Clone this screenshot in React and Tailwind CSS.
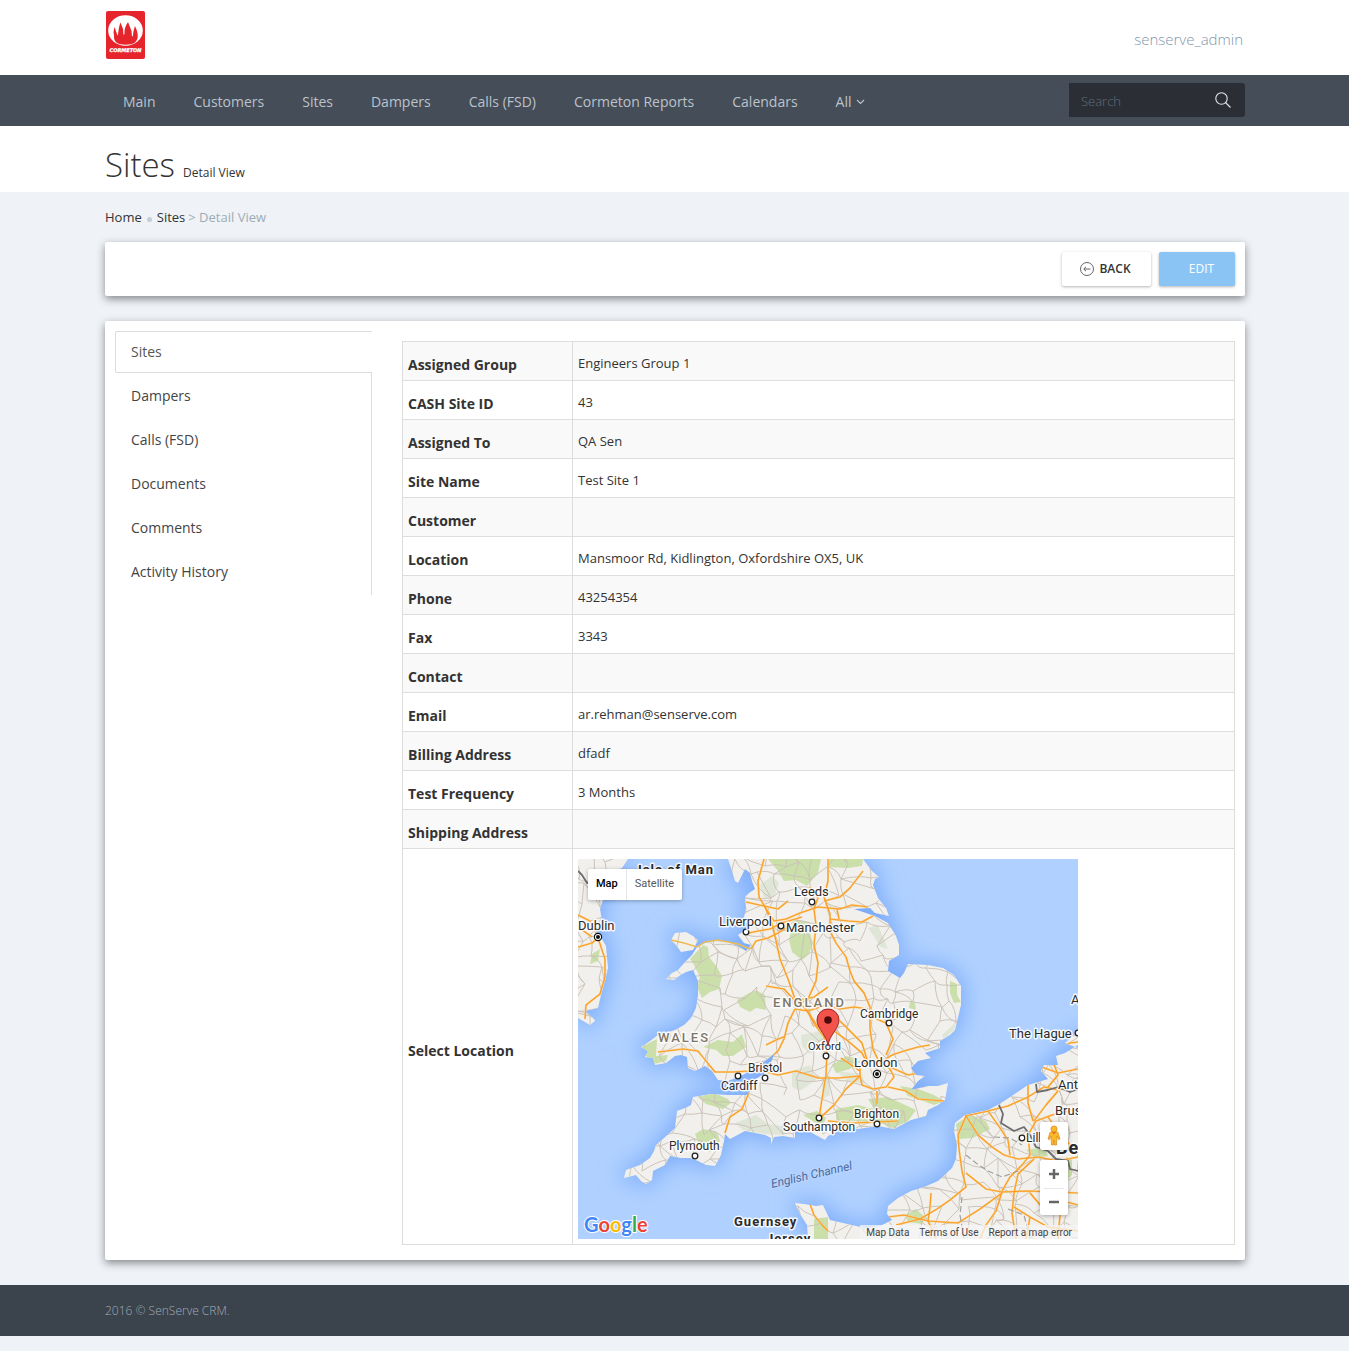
import React from "react";

const navItems = ["Main", "Customers", "Sites", "Dampers", "Calls (FSD)", "Cormeton Reports", "Calendars"];
const tabs = ["Sites", "Dampers", "Calls (FSD)", "Documents", "Comments", "Activity History"];
const rows = [
  ["Assigned Group", "Engineers Group 1"],
  ["CASH Site ID", "43"],
  ["Assigned To", "QA Sen"],
  ["Site Name", "Test Site 1"],
  ["Customer", ""],
  ["Location", "Mansmoor Rd, Kidlington, Oxfordshire OX5, UK"],
  ["Phone", "43254354"],
  ["Fax", "3343"],
  ["Contact", ""],
  ["Email", "ar.rehman@senserve.com"],
  ["Billing Address", "dfadf"],
  ["Test Frequency", "3 Months"],
  ["Shipping Address", ""],
];

/* ---------- map geometry, in a 500 x 380 space ---------- */

const britain =
  "M150 0 153 9 157 22 160 24 167 10 172 14 174 22 177 30 171 34 167 38 168 49 166 58 170 66 166 72 160 76 166 84 173 86 168 92 160 87 150 83 138 82 127 84 119 88 114 96 108 102 100 111 94 114 88 120 96 121 101 117 108 113 115 111 120 122 120 136 118 149 113 159 106 166 97 171 80 176 72 182 63 188 70 192 67 198 75 199 77 206 88 204 97 197 103 196 109 198 110 209 117 212 127 207 134 212 140 221 150 222 163 217 172 212 187 202 197 194 190 210 187 214 175 222 170 236 150 236 133 235 121 237 115 238 113 246 107 249 99 252 97 269 86 279 78 286 76 292 72 299 62 306 48 311 46 319 58 316 63 322 68 325 74 321 75 312 87 306 92 297 103 299 112 299 120 302 128 306 137 307 143 296 146 282 147 275 152 280 167 272 187 276 193 279 193 285 196 278 205 277 217 279 217 272 232 273 247 281 250 277 263 271 280 270 300 267 316 270 333 261 348 257 350 251 360 246 367 241 370 224 360 227 350 227 333 231 340 222 347 217 338 216 333 209 340 202 353 199 347 194 362 189 362 182 372 176 377 171 383 146 383 127 376 116 365 109 350 106 330 105 326 114 322 119 310 112 311 102 321 96 321 86 318 77 310 64 297 57 288 54 276 50 292 49 297 54 311 57 308 49 300 39 295 26 297 20 301 18 294 12 285 0Z";
const anglesey = "M97 74 108 73 115 77 120 81 115 91 103 93 98 86 93 81Z";
const ireland =
  "M0 0 50 0 44 9 36 12 38 19 29 26 25 41 22 50 24 62 17 72 24 80 28 87 30 109 27 122 23 136 20 149 7 152 16 160 17 162 12 166 0 159Z";
const continent =
  "M500 186 487 194 478 197 480 206 466 206 463 212 470 220 450 226 423 244 410 251 387 256 377 264 376 272 379 286 378 300 374 309 360 322 346 328 333 332 320 339 310 347 309 355 314 361 302 367 287 369 265 364 252 361 245 346 238 347 226 345 217 344 222 355 229 366 230 380 500 380Z";
const holland = "M487 184 494 178 500 172 500 189 492 186Z";
const land = britain + anglesey + ireland + continent + holland;

const parks = [
  "M190 0 243 0 240 14 229 27 218 21 206 22 200 12Z",
  "M250 0 285 0 284 7 270 9 250 8Z",
  "M125 86 130 88 131 98 139 108 144 117 141 130 132 133 124 139 119 128 122 118 116 106 112 100Z",
  "M159 141 166 137 171 134 178 131 187 136 188 151 178 149 172 153 162 148Z",
  "M216 61 232 63 232 74 235 84 231 95 224 101 214 93 211 81Z",
  "M63 188 79 180 78 197 90 196 88 202 76 205 69 198Z",
  "M125 188 140 181 155 183 164 175 168 188 155 197 145 197 138 191Z",
  "M120 238 136 234 150 240 153 244 145 250 128 245Z",
  "M117 275 125 270 139 273 142 282 132 293 122 288Z",
  "M225 256 239 252 248 259 245 266 238 264Z",
  "M258 250 280 246 296 250 290 240 310 238 325 245 338 251 330 262 315 269 303 264 280 262 258 261Z",
  "M322 227 340 230 356 236 366 242 356 246 345 242 330 237Z",
  "M254 206 268 197 280 200 272 210 258 214Z",
  "M378 265 392 256 408 262 412 270 395 279 380 280Z",
  "M372 122 379 125 379 136 383 143 376 144 372 134Z",
  "M332 142 337 144 338 151 331 149Z",
  "M327 356 338 350 348 359 344 365 330 363Z",
  "M14 95 22 90 20 102 12 105Z",
  "M236 360 250 358 250 380 236 380Z",
  "M448 291 466 288 470 297 458 299Z",
  "M488 298 494 301 494 316 488 322Z",
];

const paleParks = [
  "M182 26 194 17 201 24 196 38 186 39Z",
  "M290 69 300 66 310 90 303 88Z",
  "M223 176 242 172 248 186 232 195 224 187Z",
  "M214 212 232 206 238 221 222 232 214 228Z",
  "M157 264 178 256 190 265 210 268 206 276 187 275 165 271Z",
  "M364 176 374 167 378 162 376 171 366 180Z",
  "M258 212 284 215 287 225 270 222Z",
  "M244 222 252 216 252 236 244 240Z",
];

const motorways = [
  "M186 0 180 22 181 38 187 48 194 64 198 82 202 100 210 120 217 140 228 150 237 166 246 178 249 192 248 216 244 240 241 259",
  "M168 43 186 47 200 50 210 42",
  "M187 48 196 62 208 60 222 54 240 48 262 50 274 46 290 48",
  "M167 75 180 72 192 70 204 64 224 58",
  "M173 90 178 82 190 79 200 74 210 68",
  "M250 0 250 22 246 38 252 55 252 72 258 84 268 98 272 112 276 122 286 134 292 148 292 170 295 190 302 205",
  "M252 60 270 62 284 63 295 57",
  "M246 42 262 38 272 29 285 12",
  "M259 50 261 60",
  "M232 28 240 39 236 50 238 66 236 86 240 104 238 122 230 140 219 146",
  "M188 127 206 130 217 142 236 138 250 128",
  "M217 150 210 164 206 180 200 192 182 208 174 220 170 236 164 250 152 258 147 274",
  "M217 150 230 152 248 146 262 150 276 148 290 150",
  "M188 186 200 180 206 178",
  "M228 150 240 168 256 172 270 182 284 194 290 206",
  "M262 162 276 176 284 184 290 204",
  "M172 212 184 212 200 216 218 212 240 219 260 219 282 217",
  "M80 193 105 190 120 192 128 202 137 213 155 213 170 212 184 206",
  "M282 217 282 208 290 202 302 202 312 210 316 218 308 228 295 230 284 226Z",
  "M263 199 282 212M282 217 268 230 256 246 242 259",
  "M250 262 275 264 299 263 320 262",
  "M299 232 299 245",
  "M310 228 328 232 340 240 366 242",
  "M302 204 314 196 326 192 340 188 352 186",
  "M312 208 330 216 346 213",
  "M308 196 315 180 308 164 294 158",
  "M0 56 12 62 20 78 M0 88 14 84 20 79 27 100 27 118 22 135 8 146 7 160",
  "M0 68 14 78",
  "M388 257 380 276 381 290 384 312 388 328 372 341 359 350 342 360 318 366",
  "M387 257 410 252 430 247 450 238 466 228 480 231 500 228",
  "M388 257 400 276 414 288 426 296 440 300 460 298 480 302 500 298",
  "M388 314 408 330 424 333 450 332 476 333 500 334",
  "M424 332 432 318 444 306 452 296 450 276 458 262 474 256 500 250",
  "M450 226 450 244 455 262",
  "M410 252 420 266 430 281 432 296",
  "M438 380 434 354 436 334 440 315 456 300",
  "M436 348 452 358 470 368 500 372",
  "M353 334 352 348 350 362 358 380",
  "M310 358 326 356 350 362 380 364 402 350 424 334",
  "M424 333 418 352 408 366 402 380",
  "M452 334 464 348 478 340 500 346",
  "M470 258 480 272 492 286 500 288",
  "M456 262 468 246 480 232",
  "M464 208 480 214 500 210M474 200 480 216 470 228",
  "M481 190 492 184 500 183",
  "M482 356 480 380M452 358 448 380",
  "M232 345 236 356 244 366 250 372",
];

const borders = [
  "M421 246 425 255 423 264 436 272 446 268 452 276 458 288 470 292 478 300 490 302 492 310 500 312",
  "M458 225 459 233 470 231 480 228 492 233 500 230",
  "M0 12 4 16 9 24 18 22",
];

const dashes = ["M388 296 398 304 410 312 424 318 440 312", "M384 338 382 356 386 380M416 278 432 279 444 286", "M430 350 446 356 452 380"];

/* Minor road mesh: a jittered grid whose nodes join their neighbours. */
function rand(a, b, k) {
  const v = Math.sin(a * 127.1 + b * 311.7 + k * 74.7) * 43758.5453;
  return v - Math.floor(v);
}
function node(i, j) {
  return [Math.round(i * 17 + rand(i, j, 1) * 18 - 9), Math.round(j * 16 + rand(i, j, 2) * 16 - 8)];
}
function buildMinorRoads() {
  let d = "";
  const link = (p, q, k) => {
    const mx = Math.round((p[0] + q[0]) / 2 + (k - 0.5) * 9);
    const my = Math.round((p[1] + q[1]) / 2 + (0.5 - k) * 9);
    d += `M${p[0]} ${p[1]}Q${mx} ${my} ${q[0]} ${q[1]}`;
  };
  for (let i = -1; i < 31; i++) {
    for (let j = -1; j < 25; j++) {
      const p = node(i, j);
      if (rand(i, j, 3) > 0.2) link(p, node(i + 1, j), rand(i, j, 6));
      if (rand(i, j, 4) > 0.25) link(p, node(i, j + 1), rand(i, j, 7));
      if (rand(i, j, 5) > 0.65) link(p, node(i + 1, j + 1), rand(i, j, 8));
    }
  }
  return d;
}
const minorRoads = buildMinorRoads();

const places = [
  ["Dublin", 0, 71, 13],
  ["Leeds", 216, 37, 13],
  ["Liverpool", 141, 67, 13],
  ["Manchester", 208, 73, 13],
  ["Cambridge", 282, 159, 12],
  ["Oxford", 230, 191, 11],
  ["London", 276, 208, 13],
  ["Bristol", 170, 213, 12],
  ["Cardiff", 143, 231, 12],
  ["Southampton", 205, 272, 12],
  ["Brighton", 276, 259, 12],
  ["Plymouth", 91, 291, 12],
  ["The Hague", 431, 179, 13],
  ["A", 493, 145, 13],
  ["Ant", 480, 230, 13],
  ["Brus", 477, 256, 13],
  ["Lille", 448, 283, 12],
];
const dots = [[234, 43], [168, 73], [203, 67], [311, 164], [248, 197], [187, 219], [160, 217], [241, 259], [299, 265], [117, 297], [444, 279], [500, 174]];

function LocationMap() {
  return (
    <div className="relative h-[380px] w-full max-w-[500px] overflow-hidden bg-[#b0d1ff] font-[Roboto,sans-serif]">
      <svg viewBox="0 0 500 380" width="500" height="380" className="block max-w-none" role="img" aria-label="Map of southern Britain">
        <defs>
          <clipPath id="land">
            <path d={land} />
          </clipPath>
          <filter id="shore" x="-10%" y="-10%" width="120%" height="120%">
            <feGaussianBlur stdDeviation="11" />
          </filter>
        </defs>
        <rect width="500" height="380" fill="#b0d1ff" />
        <path d={land} fill="#7aabfa" stroke="#7aabfa" strokeWidth="6" filter="url(#shore)" />
        <path d={land} fill="#f2f0ed" />
        <g clipPath="url(#land)" fill="none" strokeLinejoin="round">
          {paleParks.map((d) => <path key={d} d={d} fill="#dfe6d8" />)}
          {parks.map((d) => <path key={d} d={d} fill="#cadfaa" />)}
          <path d={minorRoads} stroke="#cbc3b9" strokeWidth="1" />
          {motorways.map((d) => <path key={d} d={d} stroke="#fbd08c" strokeWidth="2" />)}
          {motorways.map((d) => <path key={d} d={d} stroke="#fa9e25" strokeWidth="1.2" />)}
          {dashes.map((d) => <path key={d} d={d} stroke="#a0a0a0" strokeWidth="1.2" strokeDasharray="6 3" />)}
          {borders.map((d) => <path key={d} d={d} stroke="#6e6e72" strokeWidth="1.8" />)}
        </g>
        <path d="M93 81 106 84 119 88 127 83 140 81 160 85 172 90" fill="none" stroke="#eebc55" strokeWidth="1.4" />
        <g fill="#fff" stroke="#222" strokeWidth="1.3">
          {dots.map(([x, y]) => <circle key={`${x}-${y}`} cx={x} cy={y} r="2.8" />)}
        </g>
        {[[20, 78], [299, 215]].map(([x, y]) => (
          <g key={x}>
            <circle cx={x} cy={y} r="3.6" fill="#fff" stroke="#111" strokeWidth="1.2" />
            <circle cx={x} cy={y} r="2" fill="#111" />
          </g>
        ))}
        <g fill="#2b2b2b" stroke="#fff" strokeOpacity="0.85" strokeWidth="3" strokeLinejoin="round" paintOrder="stroke">
          {places.map(([name, x, y, size]) => <text key={name} x={x} y={y} fontSize={size}>{name}</text>)}
          <g fontWeight="700" fontSize="13" letterSpacing="1">
            <text x="60" y="15">Isle of Man</text>
            <text x="156" y="367">Guernsey</text>
            <text x="188" y="384">Jersey</text>
          </g>
          <text x="478" y="295" fontWeight="700" fontSize="18" letterSpacing="1">Be</text>
          <g fill="#7d7769" fontSize="13" fontWeight="500" letterSpacing="2">
            <text x="195" y="148">ENGLAND</text>
            <text x="80" y="183">WALES</text>
          </g>
        </g>
        <text fontSize="12" fontStyle="italic" fill="#4a6a9c" stroke="#b9d5ff" strokeWidth="2" paintOrder="stroke" transform="translate(194 329) rotate(-13)">English Channel</text>
        <path d="M250 187C249 176 239 170 239 161A11 11 0 0 1 261 161C261 170 251 176 250 187Z" fill="#f3534a" stroke="#9c2a24" strokeWidth="1" />
        <circle cx="250" cy="161" r="3.8" fill="#4c0b0b" />
        <text x="6" y="373" fontSize="20" fontWeight="700" stroke="#fff" strokeWidth="2" paintOrder="stroke" fontFamily="Lato, sans-serif">
          <tspan fill="#4285f4">G</tspan><tspan fill="#ea4335">o</tspan><tspan fill="#fbbc05">o</tspan><tspan fill="#4285f4">g</tspan><tspan fill="#34a853">l</tspan><tspan fill="#ea4335">e</tspan>
        </text>
      </svg>

      <div className="absolute left-2.5 top-2.5 flex h-[31px] rounded-xs bg-white text-[11px] shadow-[0_1px_4px_rgba(0,0,0,0.3)]">
        <button type="button" className="px-2 font-medium text-black">Map</button>
        <button type="button" className="border-l border-gray-200 px-2 text-[#565656]">Satellite</button>
      </div>

      <div className="absolute bottom-6 right-2.5 flex w-7 flex-col gap-2.5">
        <button type="button" aria-label="Street View" className="flex h-7 items-center justify-center rounded-xs bg-white shadow-[0_1px_4px_rgba(0,0,0,0.3)]">
          <svg width="14" height="22" viewBox="0 0 14 22">
            <path d="M3 7.500 5 6.500H9L11 7.500 13 14 11.500 14.500 10 11 9.500 20H7.500L7 15 6.500 20H4.500L4 11 2.500 14.500 1 14Z" fill="#fbb829" stroke="#d58a1c" strokeWidth="0.7" />
            <circle cx="7" cy="4" r="3.100" fill="#fbb829" stroke="#d58a1c" strokeWidth="0.7" />
            <path d="M5 7H9L7 9.500Z" fill="#e0662a" />
          </svg>
        </button>
        <div className="flex flex-col rounded-xs bg-white shadow-[0_1px_4px_rgba(0,0,0,0.3)]">
          <button type="button" aria-label="Zoom in" className="flex h-7 items-center justify-center">
            <svg width="12" height="12" viewBox="0 0 12 12"><path d="M6 1V11M1 6H11" stroke="#666" strokeWidth="2.500" /></svg>
          </button>
          <div className="mx-1 border-t border-gray-200" />
          <button type="button" aria-label="Zoom out" className="flex h-[26px] items-center justify-center">
            <svg width="12" height="12" viewBox="0 0 12 12"><path d="M1 6H11" stroke="#666" strokeWidth="2.500" /></svg>
          </button>
        </div>
      </div>

      <div className="absolute bottom-0 right-0 flex h-3.5 items-center gap-2.5 bg-[#f5f5f5]/75 px-1.5 text-[10px] text-[#444]">
        <a href="#map-data">Map Data</a>
        <a href="#terms">Terms of Use</a>
        <a href="#report">Report a map error</a>
      </div>
    </div>
  );
}

function Logo() {
  return (
    <svg width="39" height="48" viewBox="0 0 39 48" role="img" aria-label="Cormeton">
      <rect width="39" height="48" rx="2" fill="#e5242c" />
      <ellipse cx="19.500" cy="19.500" rx="17.300" ry="15.300" fill="#fff" />
      <path d="M8 24C7 21 8 19 8.500 16L11.500 24.500 12 24C12.500 19 13 15 14.500 11.500L17 18 17.500 24 18.500 23C18 18 20 14 22 11L25.500 20 26 25.500 27 25C27 21 28 18 29 15L31 20C32 24 32.500 28 29 31.500C25 34.500 14 34.500 10.500 31.500C8 29.500 8 27 8 24Z" fill="#e5242c" />
      <text x="19.500" y="41" textAnchor="middle" fontFamily="DejaVu Sans, sans-serif" fontWeight="700" fontStyle="italic" fontSize="5" fill="#fff" stroke="#fff" strokeWidth="0.3">CORMETON</text>
    </svg>
  );
}

const container = "mx-auto w-full max-w-[1169px] pl-[15px] pr-[14px]";
const cardShadow = "rounded-xs bg-white shadow-[0_3px_8px_rgba(0,0,0,0.45)]";

export default function App() {
  return (
    <div className="bg-[#eff3f8] pb-[15px] font-['Open_Sans',sans-serif] text-[13px] text-[#333]">
      <header>
        <div className="bg-white">
          <div className={`${container} flex h-[75px] items-start justify-between`}>
            <a href="#home" className="ml-px mt-[11px] block"><Logo /></a>
            <a href="#account" className="mt-7 mr-0.5 text-[15px] leading-[22px] font-light text-[#7f96ac]">senserve_admin</a>
          </div>
        </div>
        <div className="bg-[#444d58]">
          <div className={`${container} flex min-h-[51px] items-start justify-between`}>
            <nav className="flex flex-wrap gap-x-0.5 text-sm text-[#bcc2cb]">
              {navItems.map((item) => (
                <a key={item} href="#nav" className="px-[18px] pt-[17px] pb-3.5 leading-5">{item}</a>
              ))}
              <a href="#all" className="flex items-center gap-1 px-[18px] pt-[17px] pb-3.5 leading-5">
                All
                <svg width="9" height="6" viewBox="0 0 9 6" fill="none" stroke="currentColor" strokeWidth="1.200"><path d="M1 1 4.500 4.500 8 1" /></svg>
              </a>
            </nav>
            <form className="mt-2 flex h-[34px] w-44 items-center rounded-r-[3px] bg-[#2b2f35] pr-3.5 pl-3">
              <input aria-label="Search" placeholder="Search" className="h-[34px] min-w-0 flex-1 bg-transparent pt-px text-[13px] font-light text-white outline-none placeholder:text-[#616d7d]" />
              <button type="button" aria-label="Submit search">
                <svg width="16" height="16" viewBox="0 0 16 16" fill="none" stroke="#e4e6ea" strokeWidth="1.100"><circle cx="6.500" cy="6.500" r="5.700" /><path d="M10.500 10.500 15.500 15.500" /></svg>
              </button>
            </form>
          </div>
        </div>
      </header>

      <div className="bg-white">
        <div className={`${container} flex h-[66px] items-baseline gap-2 pt-4`}>
          <h1 className="text-[33px] leading-[46px] font-light">Sites</h1>
          <span className="text-xs">Detail View</span>
        </div>
      </div>

      <main className={`${container} pt-4`}>
        <nav aria-label="Breadcrumb" className="flex h-[18px] items-center leading-[18px]">
          <a href="#home">Home</a>
          <span className="mx-[5px] mt-1 size-[5px] rounded-full bg-[#c5ccd5]" />
          <a href="#sites">Sites</a>
          <span className="ml-[3px] text-[#9eacb4]">&gt; Detail View</span>
        </nav>

        <div className={`${cardShadow} mt-4 flex justify-end gap-2 p-2.5`}>
          <button type="button" className="flex h-[34px] w-[89px] items-center justify-center gap-[5px] rounded-xs bg-white pr-0.5 text-xs font-semibold shadow-[0_1px_3px_rgba(0,0,0,0.3)]">
            <svg width="14" height="14" viewBox="0 0 14 14" fill="none" stroke="#555" strokeWidth="0.900"><circle cx="7" cy="7" r="6.500" /><path d="M10.500 7H4M6 4.800 3.700 7 6 9.200" /></svg>
            BACK
          </button>
          <button type="button" className="h-[34px] w-[76px] rounded-xs bg-[#89c4f4] pl-[9px] text-xs font-medium text-white shadow-[0_1px_3px_rgba(0,0,0,0.3)]">EDIT</button>
        </div>

        <section className={`${cardShadow} mt-[25px] flex gap-[30px] p-2.5 pb-[15px]`}>
          <div role="tablist" aria-label="Site sections" className="flex w-[257px] shrink-0 flex-col self-start text-sm">
            {tabs.map((tab, index) =>
              index === 0 ? (
                <button key={tab} type="button" role="tab" aria-selected="true" className="h-[42px] rounded-l-xs border border-r-0 border-[#ddd] px-[15px] text-left text-[#555]">{tab}</button>
              ) : (
                <button key={tab} type="button" role="tab" aria-selected="false" className="h-11 border-r border-[#ddd] px-4 pt-0.5 text-left text-[#444] last:h-[46px] last:pb-0.5">{tab}</button>
              )
            )}
          </div>

          <div className="min-w-0 flex-1 pt-2.5">
            <table className="w-full table-fixed border-collapse">
              <tbody>
                {rows.map(([label, value]) => (
                  <tr key={label} className="odd:bg-[#f9f9f9]">
                    <th scope="row" className="w-[170px] border border-[#ddd] px-[5px] pt-[13px] pb-[5px] text-left text-sm font-bold">{label}</th>
                    <td className="border border-[#ddd] px-[5px] pt-3 pb-2 align-top leading-[18px]">{value}</td>
                  </tr>
                ))}
                <tr>
                  <th scope="row" className="w-[170px] border border-[#ddd] px-[5px] pt-[13px] pb-[5px] text-left text-sm font-bold">Select Location</th>
                  <td className="border border-[#ddd] px-[5px] pt-2.5 pb-[5px]"><LocationMap /></td>
                </tr>
              </tbody>
            </table>
          </div>
        </section>
      </main>

      <footer className="mt-[25px] bg-[#3b434c]">
        <div className={`${container} py-4 text-xs leading-[19px] font-light text-[#a2abb7]`}>2016 © SenServe CRM.</div>
      </footer>
    </div>
  );
}
